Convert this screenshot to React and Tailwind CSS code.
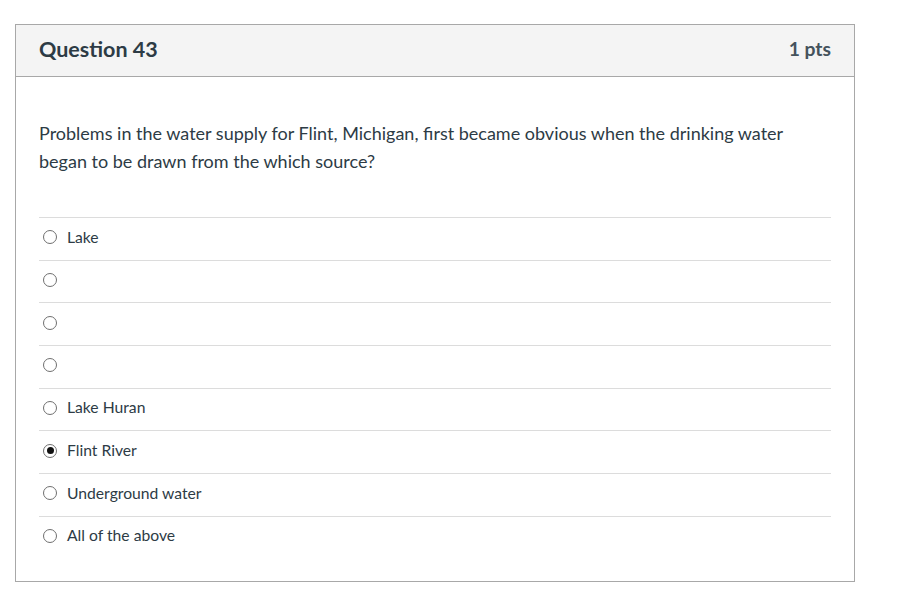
import React from "react";

const options = [
  { label: "Lake" },
  { label: "" },
  { label: "" },
  { label: "" },
  { label: "Lake Huran" },
  { label: "Flint River", checked: true },
  { label: "Underground water" },
  { label: "All of the above" },
];

function Radio({ checked }) {
  return (
    <span className="flex items-center justify-center w-[14px] h-[14px] rounded-full border border-[#6f6f6f] bg-white shrink-0">
      {checked && <span className="block w-[7px] h-[7px] rounded-full bg-[#111]" />}
    </span>
  );
}

export default function App() {
  return (
    <div
      className="w-[901px] h-[611px] bg-white pt-[24px] pl-[15px]"
      style={{ fontFamily: "Lato, 'Open Sans', sans-serif" }}
    >
      <div className="w-[840px] border border-[#a8a8a8] text-[#2d3b45]">
        <div className="flex items-center justify-between h-[52px] pb-[2px] px-[23px] bg-[#f4f4f4] border-b border-[#a8a8a8]">
          <h2 className="text-[21.5px] font-bold">Question 43</h2>
          <div className="text-[19.3px] font-bold text-[#44525c]">1 pts</div>
        </div>
        <div className="px-[23px] pt-[42px] pb-[22px]">
          <p className="text-[18px] leading-[28px]">
            Problems in the water supply for Flint, Michigan, first became obvious when the drinking water began to be drawn from the which source?
          </p>
          <div className="mt-[42px]">
            {options.map((o, i) => (
              <div
                key={i}
                className="flex items-center gap-[10px] h-[42.7px] pl-[4px] pb-[3px] border-t border-[#dcdcdc] text-[15.7px]"
              >
                <Radio checked={o.checked} />
                <span>{o.label}</span>
              </div>
            ))}
          </div>
        </div>
      </div>
    </div>
  );
}
